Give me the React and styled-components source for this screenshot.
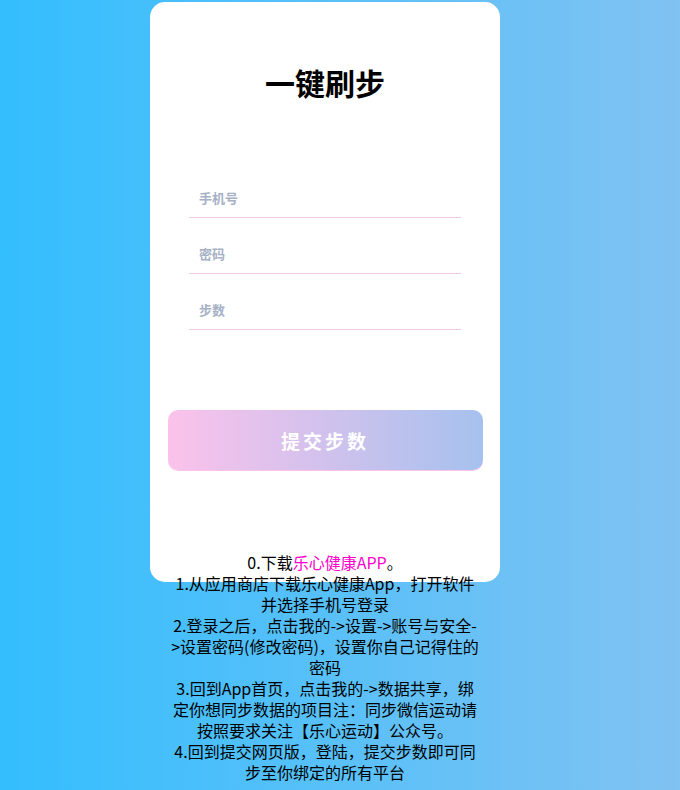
import React from "react";
import styled, { createGlobalStyle } from "styled-components";

const GlobalStyle = createGlobalStyle`
  body {
    margin: 0;
    font-family: "Noto Sans CJK SC", "Noto Sans", sans-serif;
  }
`;

const Page = styled.div`
  min-height: 100vh;
  background: linear-gradient(to right, #33befe, #80c2f2);
  display: flex;
  justify-content: center;
  padding: 2px 30px 0 0;
  box-sizing: border-box;
`;

const Card = styled.div`
  width: 350px;
  height: 580px;
  background: #fff;
  border-radius: 15px;
  display: flex;
  flex-direction: column;
  align-items: center;

  & > * {
    flex-shrink: 0;
  }
`;

const Title = styled.h1`
  margin: 60px 0 0;
  font-size: 30px;
  line-height: 40px;
  font-weight: bold;
  color: #000;
`;

const Form = styled.div`
  margin-top: 79px;
  display: flex;
  flex-direction: column;
  gap: 19px;
`;

const Field = styled.input`
  width: 272px;
  height: 37px;
  box-sizing: border-box;
  border: none;
  border-bottom: 1px solid #f4c8e8;
  outline: none;
  padding: 0 10px 3px;
  font-family: inherit;
  font-size: 13px;
  font-weight: bold;
  color: #333;

  &::placeholder {
    color: #a6b1c6;
  }
`;

const Submit = styled.button`
  margin-top: 80px;
  width: 315px;
  height: 60px;
  border: none;
  border-radius: 10px;
  background: linear-gradient(to right, #fbc2eb, #a6c1ee);
  box-shadow: 0 1px 0 #fbc2eb;
  color: #fff;
  font-family: inherit;
  font-size: 19px;
  font-weight: bold;
  letter-spacing: 3px;
  cursor: pointer;
`;

const Guide = styled.div`
  margin-top: 82px;
  width: 310px;
  text-align: center;
  font-size: 16px;
  line-height: 21px;
  color: #000;

  a {
    color: #ff00cc;
    text-decoration: none;
  }
`;

export default function App() {
  return (
    <>
      <GlobalStyle />
      <Page>
        <Card>
          <Title>一键刷步</Title>
          <Form>
            <Field type="text" placeholder="手机号" />
            <Field type="password" placeholder="密码" />
            <Field type="text" placeholder="步数" />
          </Form>
          <Submit>提交步数</Submit>
          <Guide>
            0.下载<a href="#">乐心健康APP</a>。<br />
            1.从应用商店下载乐心健康App，打开软件并选择手机号登录<br />
            2.登录之后，点击我的-&gt;设置-&gt;账号与安全-&gt;设置密码(修改密码)，设置你自己记得住的密码<br />
            3.回到App首页，点击我的-&gt;数据共享，绑定你想同步数据的项目注：同步微信运动请按照要求关注【乐心运动】公众号。<br />
            4.回到提交网页版，登陆，提交步数即可同步至你绑定的所有平台
          </Guide>
        </Card>
      </Page>
    </>
  );
}
